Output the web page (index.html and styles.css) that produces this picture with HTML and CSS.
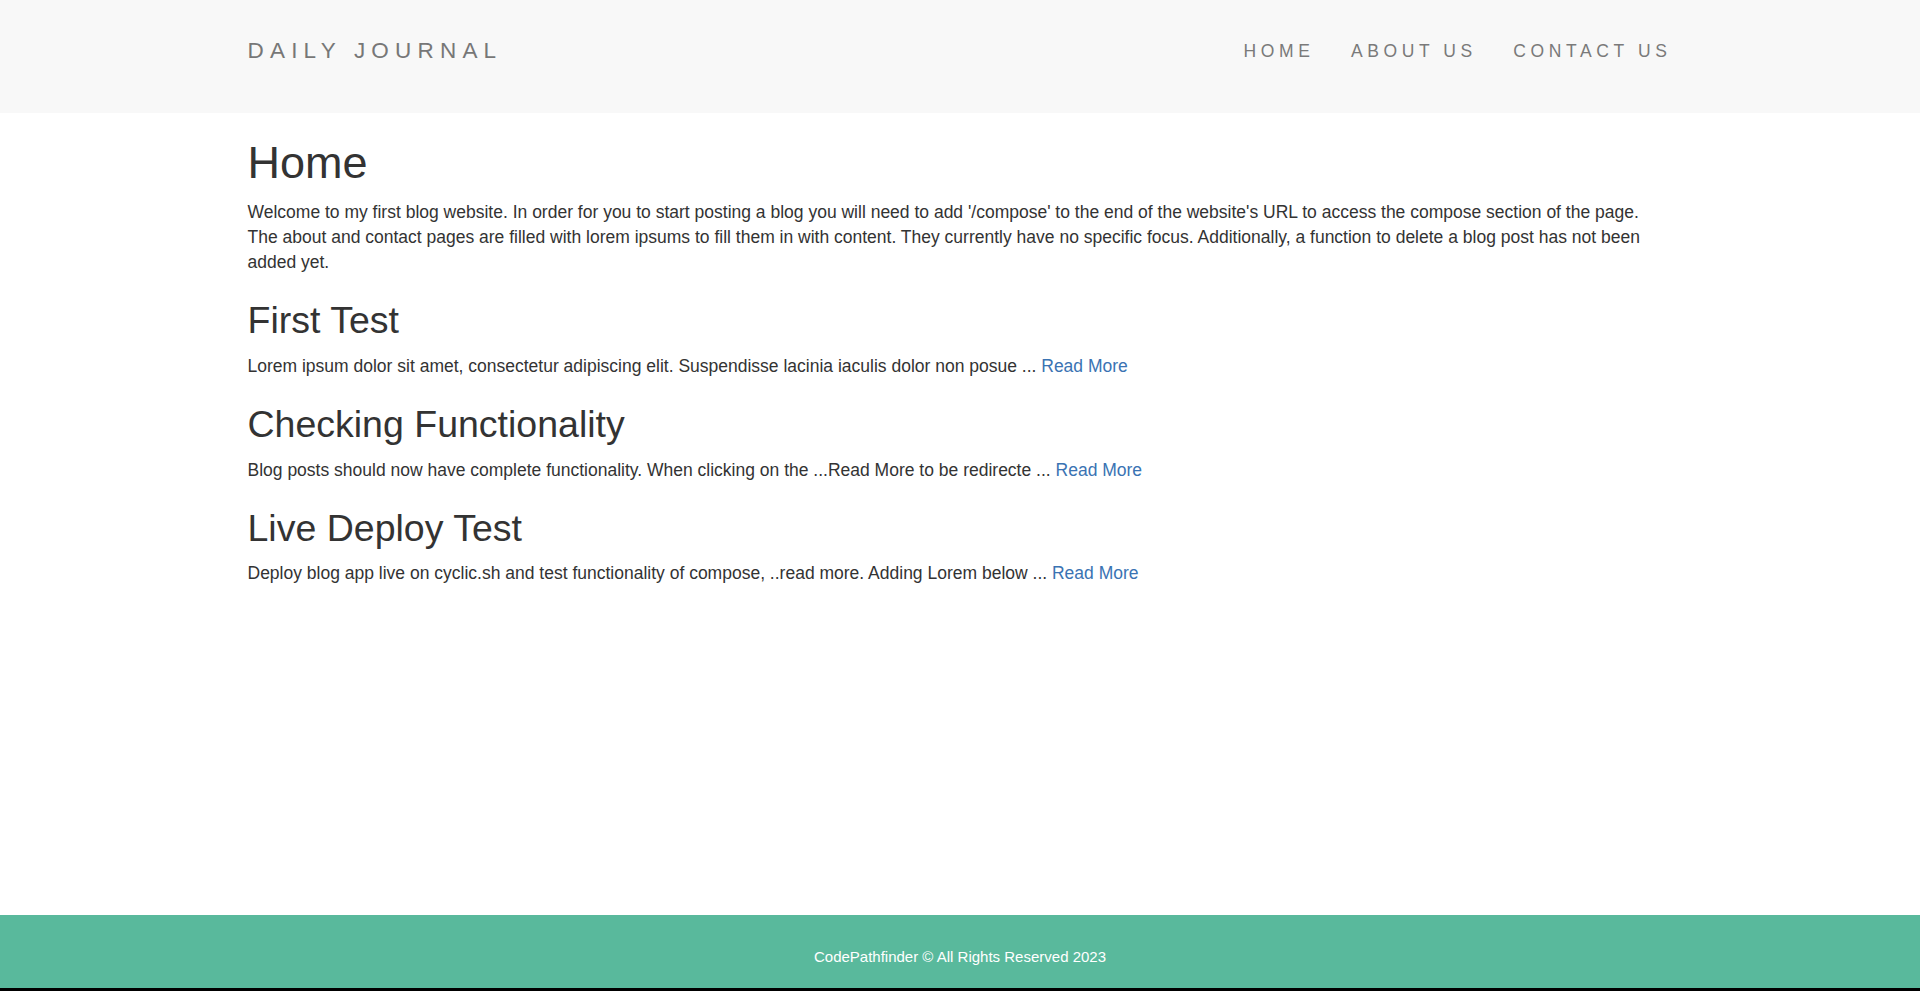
FILE: index.html
```html
<!DOCTYPE html>
<html lang="en">
<head>
<meta charset="utf-8">
<title>Daily Journal</title>
<link rel="stylesheet" href="styles.css">
</head>
<body>
<header class="navbar">
  <div class="container nav-inner">
    <a class="brand" href="#">DAILY JOURNAL</a>
    <nav class="nav-links">
      <a href="#">HOME</a>
      <a href="#">ABOUT US</a>
      <a href="#">CONTACT US</a>
    </nav>
  </div>
</header>
<main class="container content">
  <h1>Home</h1>
  <p>Welcome to my first blog website. In order for you to start posting a blog you will need to add '/compose' to the end of the website's URL to access the compose section of the page. The about and contact pages are filled with lorem ipsums to fill them in with content. They currently have no specific focus. Additionally, a function to delete a blog post has not been added yet.</p>

  <h2>First Test</h2>
  <p>Lorem ipsum dolor sit amet, consectetur adipiscing elit. Suspendisse lacinia iaculis dolor non posue ... <a href="#">Read More</a></p>

  <h2>Checking Functionality</h2>
  <p>Blog posts should now have complete functionality. When clicking on the ...Read More to be redirecte ... <a href="#">Read More</a></p>

  <h2>Live Deploy Test</h2>
  <p>Deploy blog app live on cyclic.sh and test functionality of compose, ..read more. Adding Lorem below ... <a href="#">Read More</a></p>
</main>
<footer class="footer">
  <p class="copyright">CodePathfinder © All Rights Reserved 2023</p>
</footer>
</body>
</html>
```

FILE: styles.css
```css
* {
  box-sizing: border-box;
}

html, body {
  margin: 0;
  padding: 0;
}

body {
  font-family: "Liberation Sans", Arial, Helvetica, sans-serif;
  font-size: 17.5px;
  line-height: 25px;
  color: #333333;
  background: #ffffff;
  min-height: 100vh;
  display: flex;
  flex-direction: column;
}

a {
  color: #3a73b3;
  text-decoration: none;
}

.container {
  width: 1425px;
  margin: 0 auto;
}

/* Navbar */
.navbar {
  background: #f8f8f8;
  height: 113px;
  padding-top: 38px;
}

.nav-inner {
  display: flex;
  justify-content: space-between;
  align-items: flex-start;
}

.brand {
  color: #777777;
  font-size: 22.5px;
  line-height: 25px;
  letter-spacing: 6.2px;
}

.nav-links {
  display: flex;
  gap: 36.5px;
  margin-top: 1px;
  margin-right: 1px;
}

.nav-links a {
  color: #7a7a7a;
  font-size: 17.5px;
  line-height: 25px;
  letter-spacing: 4.6px;
}

/* Content */
.content {
  flex: 1;
}

h1 {
  font-size: 45px;
  line-height: 1.1;
  font-weight: 500;
  margin: 25px 0 12.5px;
}

h2 {
  font-size: 37.5px;
  line-height: 1.1;
  font-weight: 500;
  margin: 25px 0 12.5px;
}

p {
  margin: 0 0 12.5px;
}

/* Footer */
.footer {
  background: #59b99c;
  height: 76px;
  padding-top: 30.5px;
  border-bottom: 3px solid #000000;
  text-align: center;
}

.copyright {
  margin: 0;
  color: #ffffff;
  font-size: 15px;
  line-height: 21.4px;
}
```
